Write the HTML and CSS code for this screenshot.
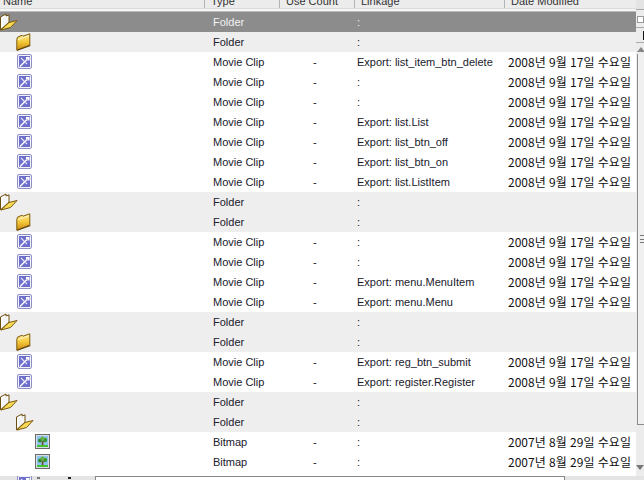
FILE: index.html
```html
<!DOCTYPE html>
<html lang="ko">
<head>
<meta charset="utf-8">
<title>Library</title>
<link rel="stylesheet" href="styles.css">
</head>
<body>
<svg class="defs" width="0" height="0">
  <defs>
    <linearGradient id="fold" x1="0" y1="0" x2="0" y2="1"><stop offset="0" stop-color="#fdeb96"/><stop offset=".5" stop-color="#f4c83a"/><stop offset="1" stop-color="#c98a10"/></linearGradient>
    <symbol id="open" viewBox="0 0 18 18">
      <path d="M.5 16.8V4L6 1V3.2L9 1.8V9L.5 16.8Z" fill="#fff" stroke="#6a4c0c"/>
      <path d="M2.5 5L7.5 3V9L2.5 13.5Z" fill="#f2f2f2"/>
      <path d="M1 17L9 9.5L17 7.5L10.5 14.5L1 17Z" fill="#f8dc58" stroke="#7c5a0c"/>
    </symbol>
    <symbol id="closed" viewBox="0 0 15 18">
      <path d="M.8 6.5L1.5 4.2L6 2.2L7 3.2L13.8 .8V12L.8 17.2Z" fill="url(#fold)" stroke="#7c5a0c"/>
      <path d="M2 6.6L13 2.6" stroke="#fff6cc" fill="none"/>
      <path d="M1 17.4L14.4 12.6" stroke="#5c4006" fill="none"/>
    </symbol>
    <symbol id="clip" viewBox="0 0 15 15">
      <rect x=".5" y=".5" width="14" height="14" rx="1.5" fill="#f2f2fa" stroke="#8f8fc4"/>
      <rect x="2" y="2" width="11" height="11" fill="#6e6ecc"/>
      <path d="M3 12.5L10 5.5" stroke="#fff" stroke-width="1.5" fill="none"/>
      <path d="M4 4L7.5 7.5M8.5 8.5L10 10" stroke="#e8e8fa" stroke-width="1.1" fill="none"/>
      <path d="M9 3H12.5V6.5H10.5V5H9Z" fill="#fff"/>
    </symbol>
    <symbol id="bitmap" viewBox="0 0 15 15">
      <rect x=".5" y=".5" width="14" height="14" fill="#d4dfe8" stroke="#6c6c6c"/>
      <rect x="2" y="2" width="11" height="9" fill="#8cc4ee"/>
      <rect x="2" y="11" width="11" height="2" fill="#44c032"/>
      <circle cx="5" cy="6.4" r="2" fill="#2f8a2c"/>
      <circle cx="10" cy="6" r="2.2" fill="#3a962f"/>
      <circle cx="7.5" cy="4.6" r="2.1" fill="#6ab048"/>
      <rect x="6.8" y="7" width="1.6" height="4" fill="#6e4a22"/>
    </symbol>
  </defs>
</svg>
<div class="app">
  <div class="main">
    <div class="table">
      <div class="head">
        <div class="hcell hname">Name</div>
        <div class="hcell">Type</div>
        <div class="hcell">Use Count</div>
        <div class="hcell">Linkage</div>
        <div class="hcell">Date Modified</div>
      </div>
      <div class="head-edge"></div>
      <div class="rows" id="rows"></div>
    </div>
    <div class="scroll">
      <div class="s-top"></div>
      <div class="s-cell s-cell-box"><div class="s-box"></div></div>
      <div class="s-cell s-cell-bar"><div class="s-bar"></div></div>
      <div class="s-cell s-cell-up"><div class="s-up"></div></div>
      <div class="s-thumb"><div class="s-grip"></div></div>
      <div class="s-rest"><div class="s-down"></div></div>
    </div>
  </div>
  <div class="foot">
    <svg class="foot-icon" width="15" height="15"><use href="#clip"/></svg>
    <span class="foot-dot"></span>
    <span class="foot-dot foot-dot-b"></span>
    <div class="foot-input"></div>
  </div>
</div>
<script src="app.js"></script>
</body>
</html>
```
FILE: styles.css
```css
* { box-sizing: border-box; }
html, body { margin: 0; padding: 0; }
body { width: 644px; height: 480px; overflow: hidden; background: #fff; font-family: "Liberation Sans", "Noto Sans CJK KR", sans-serif; font-size: 11px; color: #20202c; }
.defs { position: absolute; }
.app { width: 644px; height: 480px; display: flex; flex-direction: column; overflow: hidden; }
.main { display: flex; height: 476px; flex: none; }
.table { width: 636px; flex: none; display: flex; flex-direction: column; }
.head { height: 8px; flex: none; display: grid; grid-template-columns: 204px 75px 75px 150px 1fr; background: #ececec; overflow: hidden; align-items: end; }
.hcell { height: 8px; line-height: 3px; padding-left: 6px; border-left: 1px solid #b4b4b4; color: #333; white-space: nowrap; }
.hname { border-left: 0; padding-left: 3px; }
.head-edge { height: 4px; flex: none; background: #f6f6f6; border-top: 1px solid #dcdcdc; border-bottom: 1px solid #bbb; }
.rows { flex: 1; overflow: hidden; }
.row { height: 20px; display: grid; grid-template-columns: 205px 75px 75px 150px 1fr; align-items: center; background: #fff; white-space: nowrap; }
.row-group { background: #eee; }
.row-sel { background: #8c8c8c; color: #f2f2f2; }
.name { display: flex; align-items: flex-start; height: 20px; padding-top: 2px; }
.i0 { padding-left: 0; padding-top: 1px; }
.i1 { padding-left: 16px; padding-top: 1px; }
.i2 { padding-left: 35px; }
.name .icon-clip { margin-left: 1px; margin-top: 1px; }
.type { padding-left: 8px; }
.use { padding-left: 33px; }
.link { padding-left: 2px; }
.date { padding-left: 3px; padding-bottom: 2px; font-family: "Noto Sans CJK KR", sans-serif; font-size: 12px; color: #111; }
.scroll { width: 8px; flex: none; background: #ececec; display: flex; flex-direction: column; }
.s-top { height: 10px; flex: none; background: #e4e4e4; border-bottom: 1px solid #aaa; }
.s-cell { flex: none; border-bottom: 1px solid #aaa; display: flex; }
.s-cell-box { height: 18px; padding: 6px 0 0 1px; }
.s-box { width: 7px; height: 7px; background: #fff; border: 1px solid #999; }
.s-cell-bar { height: 15px; padding: 3px 0 0 7px; }
.s-bar { width: 1px; height: 9px; background: #111; }
.s-cell-up { height: 11px; border-bottom: 0; padding: 4px 0 0 1px; }
.s-up { height: 0; width: 0; border: 4px solid transparent; border-top: 0; border-bottom: 5px solid #888; }
.s-thumb { height: 371px; flex: none; background: #f0f0f0; border-left: 1px solid #8c8c8c; border-bottom: 1px solid #8c8c8c; display: flex; align-items: center; margin-left: 1px; padding-left: 2px; }
.s-grip { width: 4px; height: 8px; border-top: 1px solid #777; border-bottom: 1px solid #777; background: linear-gradient(#777, #777) center / 100% 1px no-repeat; }
.s-rest { flex: 1; display: flex; align-items: flex-end; padding: 0 0 6px 0; }
.s-down { height: 0; width: 0; border: 4px solid transparent; border-bottom: 0; border-top: 5px solid #777; }
.foot { height: 4px; flex: none; display: flex; align-items: flex-start; background: #e4e4e4; overflow: hidden; }
.foot-icon { margin: -1px 0 0 17px; flex: none; }
.foot-dot { width: 3px; height: 2px; margin: 1px 0 0 5px; background: #777; flex: none; }
.foot-dot-b { margin-left: 28px; background: #222; }
.foot-input { width: 470px; height: 4px; margin-left: 24px; flex: none; background: #fff; border-top: 1px solid #888; border-left: 1px solid #888; border-right: 1px solid #888; }
```
FILE: app.js
```js
var D = "2008년 9월 17일 수요일", E = "2007년 8월 29일 수요일";
var data = [
 ["open",0,"Folder","",":","","row-sel"],
 ["closed",1,"Folder","",":","","row-group"],
 ["clip",1,"Movie Clip","-","Export: list_item_btn_delete",D],
 ["clip",1,"Movie Clip","-",":",D],
 ["clip",1,"Movie Clip","-",":",D],
 ["clip",1,"Movie Clip","-","Export: list.List",D],
 ["clip",1,"Movie Clip","-","Export: list_btn_off",D],
 ["clip",1,"Movie Clip","-","Export: list_btn_on",D],
 ["clip",1,"Movie Clip","-","Export: list.ListItem",D],
 ["open",0,"Folder","",":","","row-group"],
 ["closed",1,"Folder","",":","","row-group"],
 ["clip",1,"Movie Clip","-",":",D],
 ["clip",1,"Movie Clip","-",":",D],
 ["clip",1,"Movie Clip","-","Export: menu.MenuItem",D],
 ["clip",1,"Movie Clip","-","Export: menu.Menu",D],
 ["open",0,"Folder","",":","","row-group"],
 ["closed",1,"Folder","",":","","row-group"],
 ["clip",1,"Movie Clip","-","Export: reg_btn_submit",D],
 ["clip",1,"Movie Clip","-","Export: register.Register",D],
 ["open",0,"Folder","",":","","row-group"],
 ["open",1,"Folder","",":","","row-group"],
 ["bitmap",2,"Bitmap","-",":",E],
 ["bitmap",2,"Bitmap","-",":",E]
];
var sizes = {open:[18,18],closed:[15,18],clip:[15,15],bitmap:[15,15]};
document.getElementById("rows").innerHTML = data.map(function(r){
  var s = sizes[r[0]];
  return '<div class="row '+(r[6]||"")+'">'+
    '<div class="name i'+r[1]+'"><svg class="icon-'+r[0]+'" width="'+s[0]+'" height="'+s[1]+'"><use href="#'+r[0]+'"/></svg></div>'+
    '<div class="type">'+r[2]+'</div><div class="use">'+r[3]+'</div>'+
    '<div class="link">'+r[4]+'</div><div class="date">'+r[5]+'</div></div>';
}).join("");
```
